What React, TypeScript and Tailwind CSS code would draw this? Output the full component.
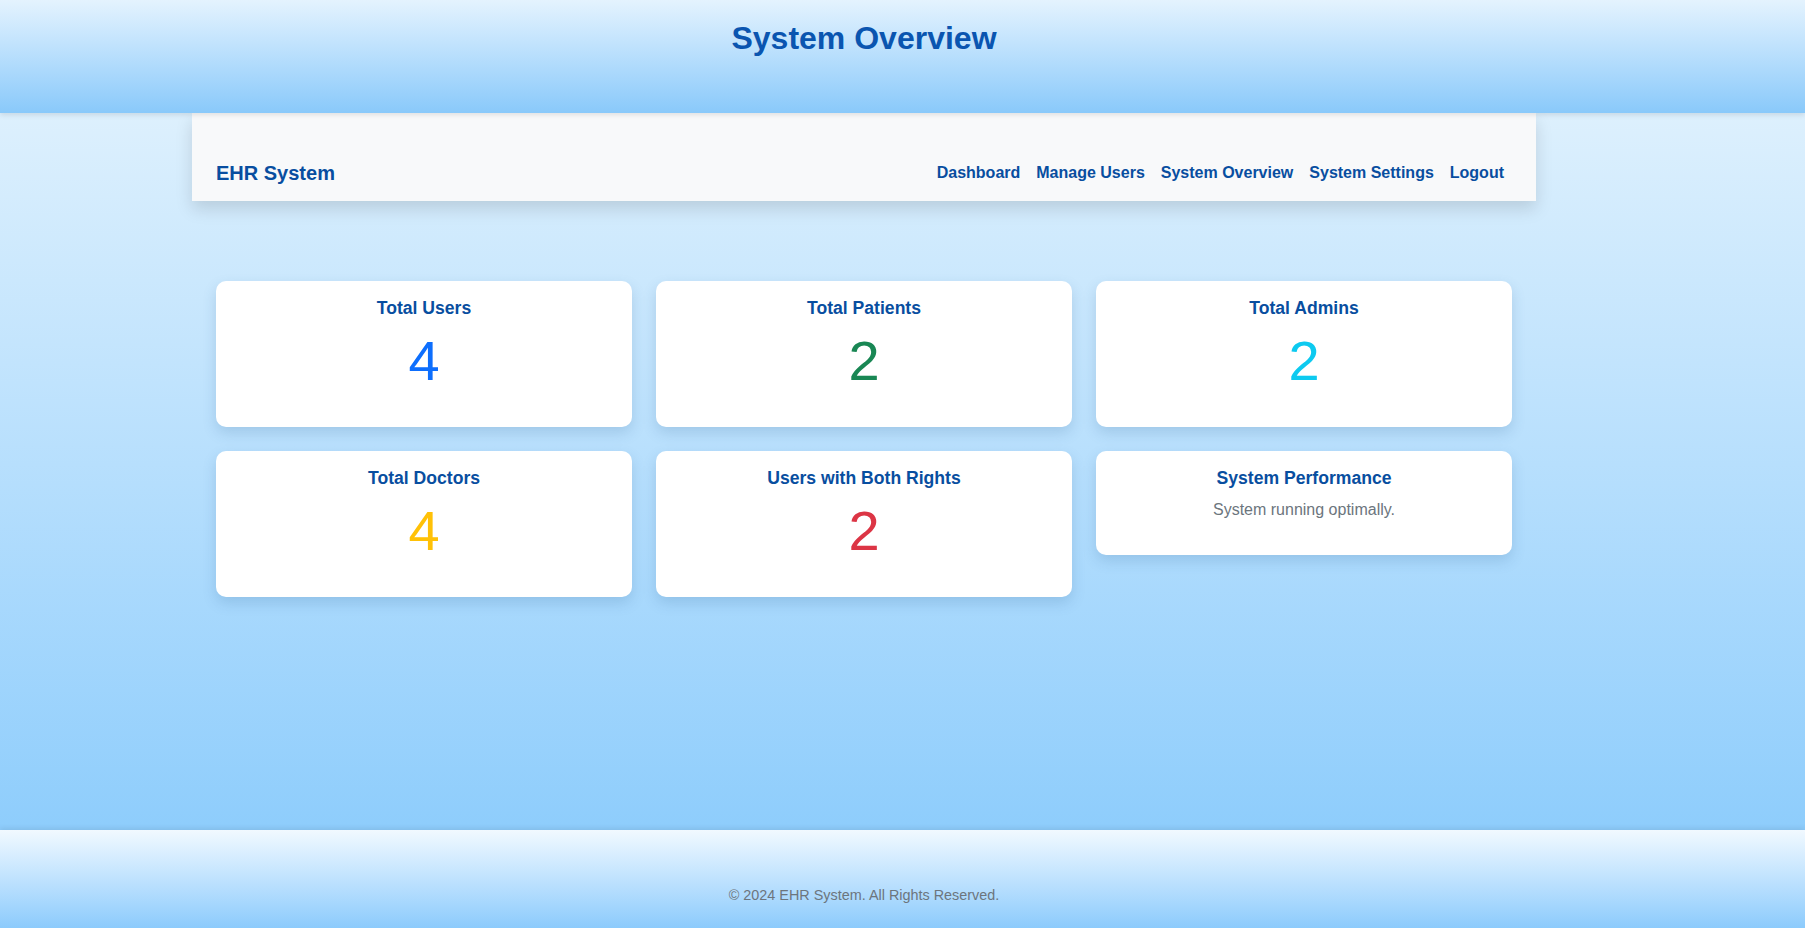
import React from 'react';

interface Stat {
  title: string;
  value?: number;
  color?: string;
  text?: string;
}

const stats: Stat[] = [
  { title: 'Total Users', value: 4, color: 'text-[#0d6efd]' },
  { title: 'Total Patients', value: 2, color: 'text-[#198754]' },
  { title: 'Total Admins', value: 2, color: 'text-[#0dcaf0]' },
  { title: 'Total Doctors', value: 4, color: 'text-[#ffc107]' },
  { title: 'Users with Both Rights', value: 2, color: 'text-[#dc3545]' },
  { title: 'System Performance', text: 'System running optimally.' },
];

const links = ['Dashboard', 'Manage Users', 'System Overview', 'System Settings', 'Logout'];

function StatCard({ stat }: { stat: Stat }) {
  return (
    <div className="bg-white rounded-[10px] shadow-[0_6px_14px_rgba(40,90,140,0.18)] px-5 pt-[17px] text-center self-start">
      <h3 className="text-[17.6px] font-bold text-[#084ea0] leading-[21px]">{stat.title}</h3>
      {stat.value !== undefined ? (
        <p className={`text-[56px] leading-[64px] mt-[10px] mb-[34px] ${stat.color}`}>{stat.value}</p>
      ) : (
        <p className="text-base text-[#6c757d] mt-[12px] mb-[36px] leading-[18px]">{stat.text}</p>
      )}
    </div>
  );
}

export default function App() {
  return (
    <div className="min-h-screen flex flex-col font-['Liberation_Sans',Arial,sans-serif]">
      <header className="h-[113px] bg-gradient-to-b from-[#e4f3fe] to-[#89c9fa] shadow-[0_2px_5px_rgba(0,0,0,0.1)] relative z-10 pr-[77px]">
        <h1 className="text-[32px] font-bold text-[#0a55b0] text-center pt-[20px] leading-[37px]">System Overview</h1>
      </header>

      <main className="flex-1 bg-gradient-to-b from-[#ddf0fd] to-[#8ecdfc]">
        <nav className="ml-[192px] w-[1344px] h-[88px] bg-[#f8f9fa] shadow-[0_8px_16px_rgba(0,0,0,0.13)] flex items-center justify-between pl-6 pr-[32px] pt-[32px]">
          <span className="text-[20px] font-bold text-[#084ea0]">EHR System</span>
          <div className="flex gap-4">
            {links.map((l) => (
              <a key={l} href="#" className="text-base font-bold text-[#084ea0]">
                {l}
              </a>
            ))}
          </div>
        </nav>

        <div className="ml-[216px] w-[1296px] mt-[80px] grid grid-cols-3 gap-6 items-start">
          {stats.map((s) => (
            <StatCard key={s.title} stat={s} />
          ))}
        </div>
      </main>

      <footer className="h-[98px] bg-gradient-to-b from-[#f1f9ff] to-[#8ccbfc] shadow-[0_-2px_5px_rgba(0,0,0,0.08)] relative flex justify-center pt-[57px] pr-[77px]">
        <p className="text-[14.4px] text-[#6c757d] leading-[17px]">© 2024 EHR System. All Rights Reserved.</p>
      </footer>
    </div>
  );
}
